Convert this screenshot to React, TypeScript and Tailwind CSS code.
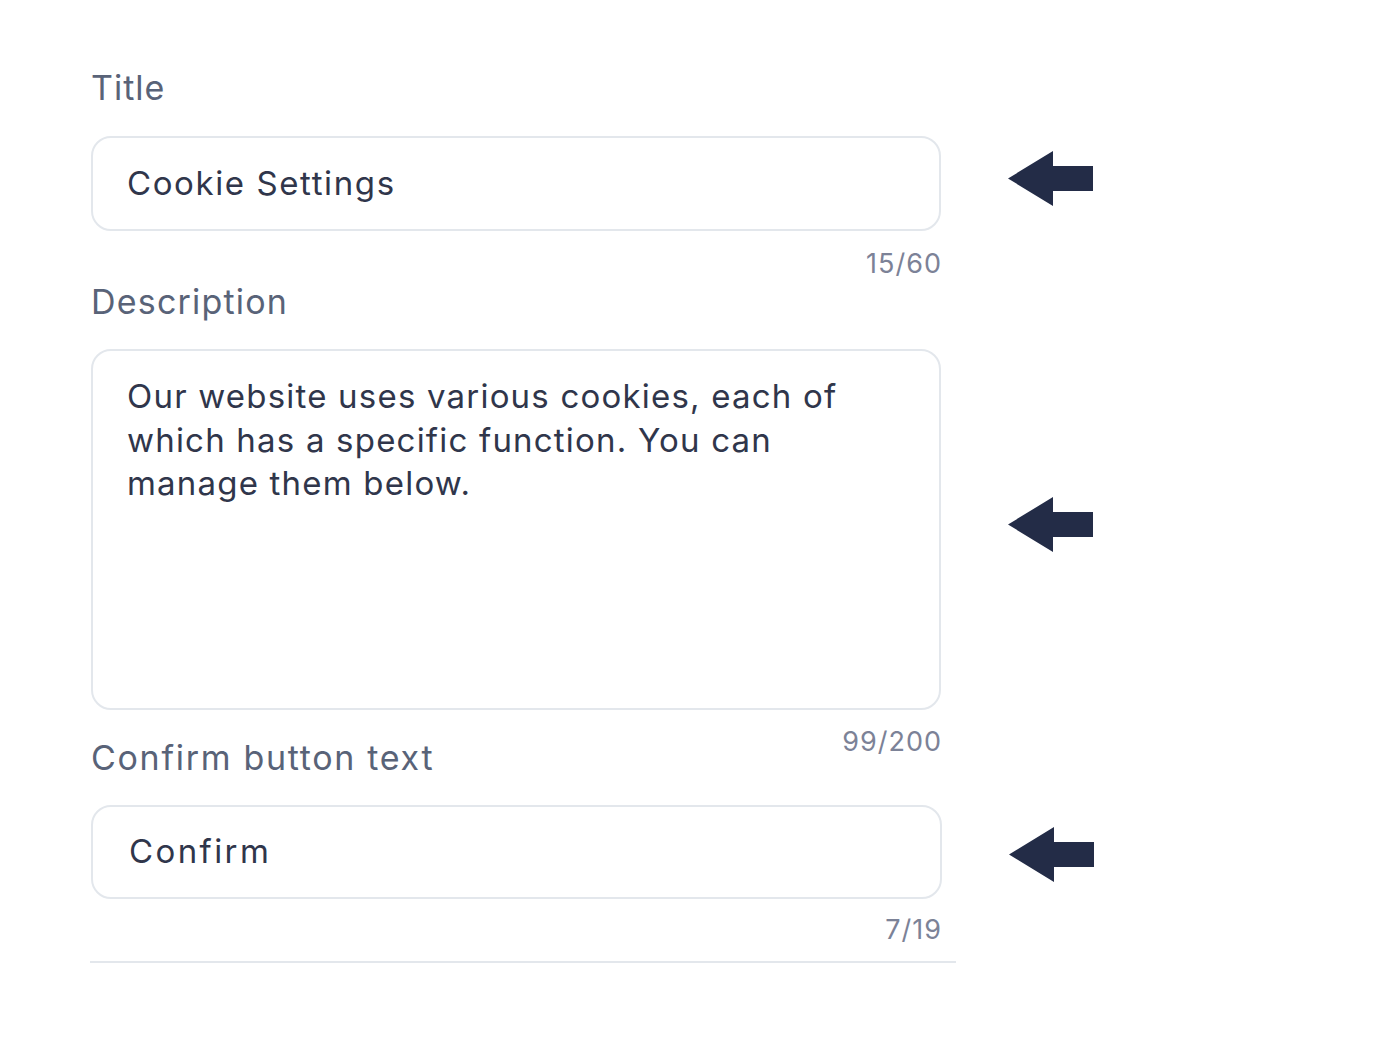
import React from "react";

const font = { fontFamily: '"Inter", "Noto Sans", sans-serif' };

function Arrow({ shift = true }: { shift?: boolean }) {
  return (
    <svg
      width="85"
      height="55"
      viewBox="0 0 85 55"
      className={shift ? "shrink-0 -translate-y-[5px]" : "shrink-0 translate-y-[2px]"}
    >
      <polygon points="0,27.5 45,0 45,15 85,15 85,40 45,40 45,55" fill="#232c47" />
    </svg>
  );
}

export default function App() {
  return (
    <div className="min-h-[1050px] w-full bg-white pl-[91px] pt-[68px]" style={font}>
      {/* Title */}
      <div className="text-[34px] leading-[40px] tracking-[1px] text-[#596378]">Title</div>
      <div className="mt-[28px] flex items-center gap-[67px]">
        <div className="flex h-[95px] w-[850px] items-center rounded-[20px] border-2 border-[#e3e7ec] pl-[34px] text-[33px] tracking-[1.6px] text-[#30364b]">
          Cookie Settings
        </div>
        <Arrow />
      </div>
      <div className="mt-[17px] w-[851px] text-right text-[27px] leading-[32px] tracking-[1px] text-[#7c8297]">15/60</div>

      {/* Description */}
      <div className="mt-[2px] text-[34px] leading-[40px] tracking-[1.2px] text-[#596378]">Description</div>
      <div className="mt-[27px] flex items-center gap-[67px]">
        <div className="h-[361px] w-[850px] rounded-[20px] border-2 border-[#e3e7ec] pl-[34px] pt-[24px] text-[33px] leading-[43.5px] tracking-[1.2px] text-[#30364b]">
          Our website uses various cookies, each of
          <br />
          which has a specific function. You can
          <br />
          manage them below.
        </div>
        <Arrow />
      </div>
      <div className="mt-[16px] w-[851px] text-right text-[27px] leading-[32px] tracking-[1px] text-[#7c8297]">99/200</div>

      {/* Confirm button text */}
      <div className="mt-[-20px] text-[34px] leading-[40px] tracking-[1.7px] text-[#596378]">Confirm button text</div>
      <div className="mt-[27px] flex items-center gap-[67px]">
        <div className="flex h-[94px] w-[851px] items-center rounded-[20px] border-2 border-[#e3e7ec] pl-[36px] text-[33px] tracking-[2.4px] text-[#30364b]">
          Confirm
        </div>
        <Arrow shift={false} />
      </div>
      <div className="mt-[15px] w-[851px] text-right text-[27px] leading-[32px] tracking-[1px] text-[#7c8297]">7/19</div>
      <div className="mt-[15px] h-[2px] w-[866px] -translate-x-px bg-[#e3e7ec]" />
    </div>
  );
}
